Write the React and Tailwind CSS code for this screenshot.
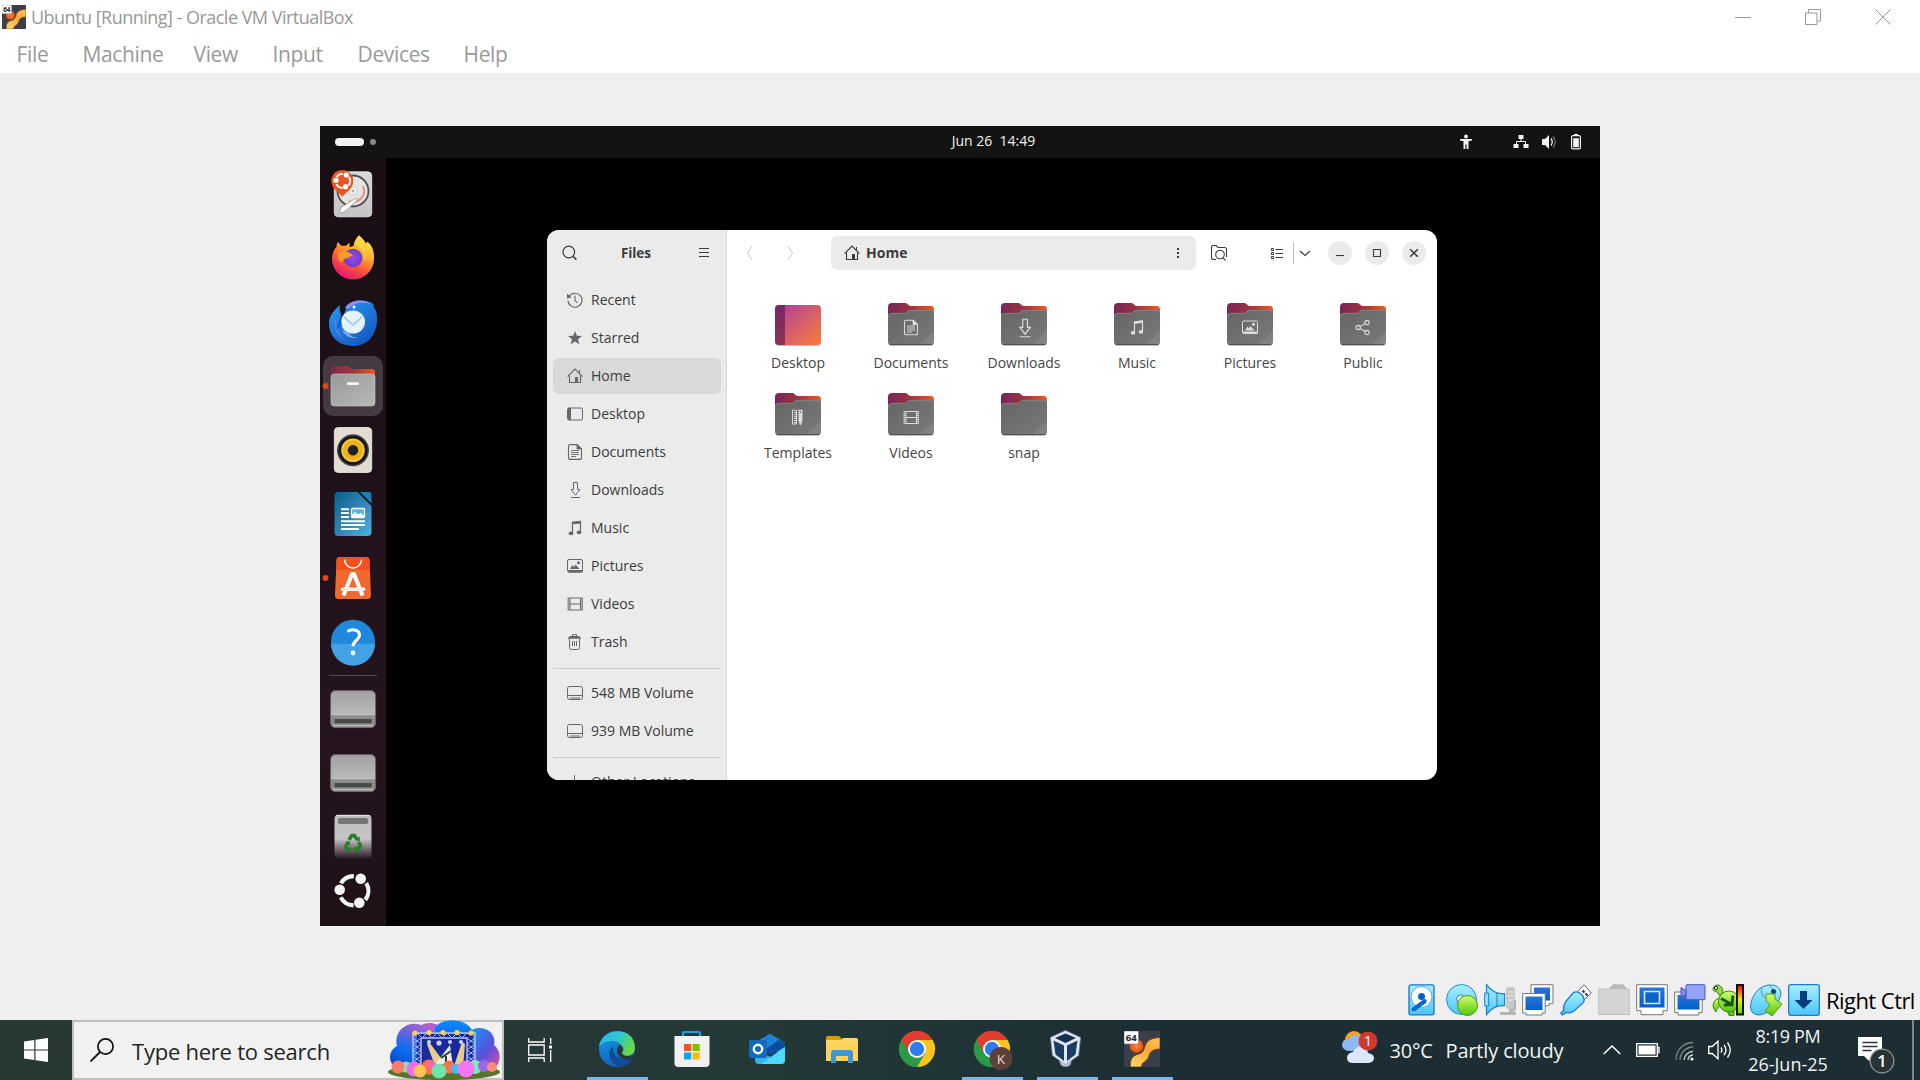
import React from "react";

/* ---------- Symbolic 16px icons used in the file manager ---------- */

const glyphs = {
  recent: (
    <>
      <path d="M2 4.6A7 7 0 1 1 1 8.6" fill="none" stroke="currentColor" strokeWidth="1.1" />
      <path d="M8 3.6v5l2.6 2.2" fill="none" stroke="currentColor" strokeWidth="1.1" />
      <path d="M0 1.6 4.6 5.6 0 6.6z" fill="currentColor" />
    </>
  ),
  starred: (
    <path fill="currentColor" d="M8 1l1.9 4.8 5.1.3-4 3.2 1.4 5L8 11.5l-4.400 2.800 1.400-5-4-3.200 5.100-.3z" />
  ),
  home: (
    <>
      <path d="M.6 8.700 8 1l7.400 7.700" fill="none" stroke="currentColor" strokeWidth="1.200" />
      <path d="M2.500 7.500v7h11v-7M12.500 2v3.500" fill="none" stroke="currentColor" strokeWidth="1.100" />
      <path d="M8 9h3v6H8z" fill="currentColor" />
    </>
  ),
  desktop: (
    <>
      <rect x=".5" y="2" width="15" height="12" rx="1.500" fill="none" stroke="currentColor" />
      <path d="M1 2h3v12H1z" fill="currentColor" />
    </>
  ),
  documents: (
    <>
      <path d="M10 .6H3.500a2 2 0 0 0-2 2v10.800a2 2 0 0 0 2 2h9a2 2 0 0 0 2-2V5z" fill="none" stroke="currentColor" strokeWidth="1.100" />
      <path d="M10 .5V5h4.600zM4 6.500h8M4 8.500h8M4 10.500h8M4 12.500h5" fill="currentColor" stroke="currentColor" strokeWidth=".9" />
    </>
  ),
  downloads: (
    <>
      <path d="M6.500.500h4v7h2.400L8.500 13.200 4.100 7.500h2.400z" fill="none" stroke="currentColor" />
      <path d="M4 15.500h9" stroke="currentColor" />
    </>
  ),
  music: (
    <>
      <path d="M5.500 13V2.500l8-1V12M5.500 3.500l8-1" fill="none" stroke="currentColor" strokeWidth="1.200" />
      <path d="M5 1.800 14 1v2.500L5 4.300z" fill="currentColor" />
      <ellipse cx="4" cy="13.300" rx="2.300" ry="1.900" fill="currentColor" />
      <ellipse cx="12" cy="12.300" rx="2.300" ry="1.900" fill="currentColor" />
    </>
  ),
  pictures: (
    <>
      <rect x=".5" y="1.500" width="15" height="12.500" rx="1.500" fill="none" stroke="currentColor" />
      <path d="M.5 12h15v2.500H1.500zM3 11l2.500-4L7 9l1.500-2.500L12.500 11z" fill="currentColor" />
      <circle cx="11.500" cy="4.800" r="1.500" fill="currentColor" />
    </>
  ),
  videos: (
    <>
      <path d="M3 2h10.500v12H3zM3 8h10.500" fill="none" stroke="currentColor" />
      <path d="M1.700 1.500v13M14.800 1.500v13" stroke="currentColor" strokeWidth="1.600" strokeDasharray="1 1" />
      <path d="M1 1.500v13M15.500 1.500v13" stroke="currentColor" strokeWidth=".6" />
    </>
  ),
  trash: (
    <>
      <path d="M2.500 5v8.500a2 2 0 0 0 2 2h6a2 2 0 0 0 2-2V5M5.500 7v5M7.500 7v5M9.500 7v5" fill="none" stroke="currentColor" />
      <path d="M1 3.200h13v1.600H1zM2.500 2h10v2h-10z" fill="currentColor" />
      <path d="M5.500 2.300V.600h4v1.700" fill="none" stroke="currentColor" />
    </>
  ),
  drive: (
    <>
      <rect x=".5" y="1.500" width="15" height="13" rx="2" fill="none" stroke="currentColor" />
      <path d="M1 10.500h14M3 13h10" stroke="currentColor" />
    </>
  ),
  plus: <path d="M7.500 1v14M1 8h14" stroke="currentColor" />,
  share: (
    <g fill="none" stroke="currentColor" strokeWidth="1.100">
      <circle cx="3.200" cy="8" r="2.100" />
      <circle cx="12" cy="3" r="2.100" />
      <circle cx="12" cy="13" r="2.100" />
      <path d="M5.200 7l4.900-2.900M5.200 9.100l4.900 2.800" />
    </g>
  ),
  templates: (
    <>
      <path d="M2.500.500h4v14h-4z" fill="none" stroke="currentColor" />
      <path d="M5 2.500v11" stroke="currentColor" strokeWidth="2" strokeDasharray="1 1" />
      <path d="M8.500 0h4v11l-1.300 4.500h-1.400L8.500 11z" fill="currentColor" />
      <path d="M9.800 2h1.400v1.500H9.800z" fill="#666" />
    </>
  ),
};

function Glyph({ name, className = "size-4" }) {
  return (
    <svg viewBox="0 0 16 16" className={className}>
      {glyphs[name]}
    </svg>
  );
}

/* ---------- VirtualBox window chrome ---------- */

function VmLogo({ className }) {
  return (
    <svg viewBox="0 0 36 36" className={className} preserveAspectRatio="none">
      <defs>
        <linearGradient id="vmlogo" x1="0" y1="1" x2="1" y2="0">
          <stop offset="0" stopColor="#ffd76a" />
          <stop offset=".6" stopColor="#fba93a" />
          <stop offset="1" stopColor="#ffc65a" />
        </linearGradient>
        <radialGradient id="vmball">
          <stop offset="0" stopColor="#ff8a3c" />
          <stop offset="1" stopColor="#ee4a08" />
        </radialGradient>
      </defs>
      <rect width="36" height="36" rx="1" fill="#3a3f4a" />
      <path d="M36 6.500v11.500c-6 0-10 2-11 7-1 4-4 5-6 7-1 1-1 2-2 4H6.500c-.5-8 2-11.500 8.500-13 4-1 5-4 6-8 2-6 7-8 15-8.500z" fill="url(#vmlogo)" stroke="#7a3c10" strokeWidth=".8" />
      <circle cx="12.500" cy="15" r="6.800" fill="url(#vmball)" />
      <rect x="0" y="0" width="14.500" height="13" rx="1" fill="#fff" stroke="#777" strokeWidth=".6" />
      <text x="7.200" y="10.200" textAnchor="middle" fontFamily="Open Sans, sans-serif" fontWeight="700" fontSize="9.500" fill="#222">64</text>
    </svg>
  );
}

function TitleBar() {
  return (
    <header className="flex h-9 items-center bg-white pb-0.5 pl-0.5">
      <VmLogo className="h-6 w-6" />
      <h1 className="ml-[5px] text-[18px] leading-[34px] tracking-[-0.52px] whitespace-nowrap text-[#989898]">
        Ubuntu [Running] - Oracle VM VirtualBox
      </h1>
      <div className="ml-auto flex items-center gap-[54px] pr-[29px] text-[#999]">
        <svg viewBox="0 0 16 16" className="size-4"><path d="M0 8.500h16" stroke="currentColor" /></svg>
        <svg viewBox="0 0 16 16" className="size-4">
          <path d="M.5 4h11.500v11.500H.5zM3.500 4V.5h12V12H12" fill="none" stroke="currentColor" />
        </svg>
        <svg viewBox="0 0 16 16" className="size-4"><path d="M.5.500l15 15M15.500.500l-15 15" stroke="currentColor" /></svg>
      </div>
    </header>
  );
}

const menus = [
  ["File", "w-[66px]"],
  ["Machine", "w-[111px]"],
  ["View", "w-[79px]"],
  ["Input", "w-[85px]"],
  ["Devices", "w-[106px]"],
  ["Help", "w-[60px]"],
];

function MenuBar() {
  return (
    <nav className="flex h-[37px] bg-white pl-[16.500px] text-[21px] leading-[36px] tracking-[-0.35px] text-[#999]">
      {menus.map(([m, w]) => (
        <span key={m} className={w}>{m}</span>
      ))}
    </nav>
  );
}

/* ---------- Ubuntu top bar and dock ---------- */

function TopBar() {
  return (
    <div className="flex h-8 items-center bg-[#131313] px-[15px] text-[#f2f2f2]">
      <div className="flex flex-1 items-center gap-1.5">
        <span className="h-2 w-[29px] rounded-full bg-[#f2f2f2]" />
        <span className="size-1.5 rounded-full bg-[#8a8a8a]" />
      </div>
      <span className="ml-[67px] h-8 text-[14px] leading-[30px] whitespace-pre">Jun 26  14:49</span>
      <div className="flex flex-1 items-center justify-end">
        <svg viewBox="0 0 16 16" className="mr-[39px] size-4">
          <circle cx="8" cy="2.500" r="1.900" fill="currentColor" />
          <path d="M2 5h12v1.500l-3.500.700V15H8.600v-4.500H7.400V15H5.500V7.200L2 6.500z" fill="currentColor" />
        </svg>
        <svg viewBox="0 0 16 16" className="mr-3 size-4">
          <path d="M5.500 1h5v4h-5zM.5 10h5v4h-5zM10.500 10h5v4h-5z" fill="currentColor" />
          <path d="M8 5v2.500M3.500 10V7.500h9V10" fill="none" stroke="currentColor" />
        </svg>
        <svg viewBox="0 0 16 16" className="mr-3.5 size-4">
          <path d="M1 5h3l4-4v14l-4-4H1z" fill="currentColor" />
          <path d="M10 4.500q2.500 3.500 0 7" fill="none" stroke="currentColor" strokeWidth="1.300" />
          <path d="M12 2.500q4.500 5.500 0 11" fill="none" stroke="#777" strokeWidth="1.200" />
        </svg>
        <svg viewBox="0 0 10 16" className="mr-1 h-4 w-2.5">
          <path d="M3 0h4v2H3z" fill="currentColor" />
          <rect x=".6" y="1.600" width="8.800" height="13.300" rx="1.500" fill="none" stroke="currentColor" strokeWidth="1.200" />
          <path d="M2.200 4.200h5.600v9H2.200z" fill="currentColor" />
        </svg>
      </div>
    </div>
  );
}

function UbuntuRing({ color }) {
  return (
    <g fill="none" stroke={color} strokeWidth="4.200">
      <path d="M46.200 14.200A14.600 14.600 0 0 1 45.300 30.900" />
      <path d="M33.500 36.300A14.600 14.600 0 0 1 20.800 28.400" />
      <path d="M21 14.300A14.600 14.600 0 0 1 33.800 7.100" />
      <g fill={color} stroke="none">
        <circle cx="40.700" cy="9.700" r="5.300" />
        <circle cx="19.700" cy="20.700" r="5.300" />
        <circle cx="39.300" cy="33.700" r="5.300" />
      </g>
    </g>
  );
}

function DockSlot({ children, h = 64 }) {
  return (
    <svg viewBox={`0 0 66 ${h}`} width="66" height={h} className="block shrink-0">
      {children}
    </svg>
  );
}

function DriveIcon() {
  return (
    <DockSlot>
      <rect x="10.600" y="13.600" width="45" height="37" rx="5" fill="url(#metal)" stroke="#666" />
      <path d="M11 38h44v8q0 4.200-4 4.200H15q-4 0-4-4.200z" fill="#8c8c8c" />
      <path d="M11 37.700h44" stroke="#c8c8c8" strokeWidth=".8" />
      <path d="M14.300 42h37.400v2.800q0 1.500-1.500 1.500H15.800q-1.500 0-1.500-1.500z" fill="#4a4a4a" />
      <path d="M13 48.700h40" stroke="#ccc" strokeWidth="1" />
    </DockSlot>
  );
}

function Dock() {
  return (
    <aside className="flex w-[66px] flex-col bg-linear-to-b from-[#190e14] via-[#25141f] via-75% to-[#1e1118] pt-1">
      <svg width="0" height="0" className="absolute">
        <defs>
          <linearGradient id="metal" x1="0" y1="0" x2="0" y2="1"><stop offset="0" stopColor="#a2a2a2" /><stop offset="1" stopColor="#c6c6c6" /></linearGradient>
          <linearGradient id="tile" x1="0" y1="0" x2="0" y2="1"><stop offset="0" stopColor="#dadada" /><stop offset="1" stopColor="#c4c4c4" /></linearGradient>
          <linearGradient id="fox" x1=".85" y1=".05" x2=".35" y2="1"><stop offset="0" stopColor="#fff44f" /><stop offset=".35" stopColor="#ffb02e" /><stop offset=".65" stopColor="#ff5a36" /><stop offset="1" stopColor="#e5146f" /></linearGradient>
          <radialGradient id="globe"><stop offset="0" stopColor="#a348f0" /><stop offset="1" stopColor="#6a3fc4" /></radialGradient>
          <linearGradient id="bird" x1="0" y1="0" x2=".7" y2="1"><stop offset="0" stopColor="#2a9bf5" /><stop offset="1" stopColor="#1259bf" /></linearGradient>
          <linearGradient id="back" x1="0" y1="0" x2="1" y2="0"><stop offset="0" stopColor="#7a2950" /><stop offset=".5" stopColor="#a5343b" /><stop offset="1" stopColor="#ee5420" /></linearGradient>
          <linearGradient id="front" x1="0" y1="0" x2="1" y2="1"><stop offset="0" stopColor="#999" /><stop offset="1" stopColor="#b9b9b9" /></linearGradient>
          <linearGradient id="writer" x1="0" y1="0" x2="1" y2="1"><stop offset="0" stopColor="#0d5d8c" /><stop offset="1" stopColor="#4eb0e2" /></linearGradient>
          <linearGradient id="bin" x1="0" y1="0" x2="0" y2="1"><stop offset="0" stopColor="#bdbdbd" /><stop offset=".55" stopColor="#c6c6c6" /><stop offset="1" stopColor="#2a1a24" /></linearGradient>
          <linearGradient id="folderback" x1="0" y1="0" x2="1" y2="0"><stop offset="0" stopColor="#77265a" /><stop offset=".5" stopColor="#9c3440" /><stop offset="1" stopColor="#f2581f" /></linearGradient>
          <linearGradient id="folderfront" x1="0" y1="0" x2="1" y2="1"><stop offset="0" stopColor="#656565" /><stop offset="1" stopColor="#7a7a7a" /></linearGradient>
          <linearGradient id="desk" x1="0" y1="0" x2="1" y2="1"><stop offset="0" stopColor="#a83aa0" /><stop offset=".5" stopColor="#d45f6c" /><stop offset="1" stopColor="#f97b3a" /></linearGradient>
        </defs>
      </svg>

      {/* Installer */}
      <DockSlot>
        <rect x="14.300" y="9.800" width="37.400" height="45" rx="4" fill="url(#tile)" stroke="#eee" strokeWidth=".8" />
        <circle cx="33" cy="29" r="15.500" fill="#e4e4e4" stroke="#4d4d4d" strokeWidth="1.800" />
        <path d="M43 24a11 11 0 0 1-14 15" fill="none" stroke="#e8927a" strokeWidth="2" />
        <circle cx="33" cy="29" r="4" fill="#fafafa" stroke="#ccc" />
        <circle cx="33" cy="29" r="1.500" fill="#aaa" />
        <path d="M19.500 50l1.500-4.500 15-9.500 1.500 2-12.500 11.500-4 1.500z" fill="#fff" stroke="#777" strokeWidth=".6" />
        <path d="M22.300 35c-3-4.500-11-8-11-16a11 11 0 0 1 22 0c0 8-8 11.500-11 16z" fill="#e95420" />
        <g transform="translate(6.300 8.200) scale(.49)"><UbuntuRing color="#fff" /></g>
      </DockSlot>

      {/* Firefox */}
      <DockSlot>
        <path d="M39 9.300c3 3 5.500 5 7 8.500 0-1 1.500-2 1.500-2C53 20 54.300 27 54 33A21 20.500 0 0 1 12 33c0-5 2-10 4.500-12 0-2 .5-3.500 1.500-5l3.500 4c2-.5 3-.3 4.500 0 1-1.500 2-2.500 3.500-3v4l4-1c.5-5 3-8 5.500-10.700z" fill="url(#fox)" />
        <circle cx="33" cy="32" r="9.300" fill="url(#globe)" />
        <path d="M18 27c3-2.500 7-2 10-1l5 3c-3 1-4 3-7 3.500-3 .5-5 2-4 5-3-2-5-6-4-10.500z" fill="#ff9a2a" />
        <path d="M40 17c6 5 8 12 4 19 2-8-1-13-6-16z" fill="#ffdf4a" opacity=".8" />
      </DockSlot>

      {/* Thunderbird */}
      <DockSlot>
        <path d="M9 33c0-6 3-11 11-18-1 4 0 6 1 9 1 3 0 5-1 8l4-5c0-10 8-16.500 17-16.500 5 0 9 1 13 4-1 1-1 2 0 3 3 4 3.500 9 3 14-1 15-11 24.500-23.500 24.500C19 56 9 47 9 33z" fill="url(#bird)" />
        <path d="M25 18c4-8 18-10 26-4-8-2-17-2-22 5z" fill="#8f8ff5" />
        <ellipse cx="33" cy="32" rx="12" ry="11.500" fill="#e3f2fd" />
        <path d="M23.500 26.500L33 35l9.500-8.500" fill="none" stroke="#9cc4e8" strokeWidth="1.500" />
        <path d="M29 43c2 4 5 4 9 5-8 1-14-3-16-8z" fill="#7fa8f2" />
        <circle cx="34" cy="17" r="1.500" fill="#fff" />
        <path d="M15 28c-2 8 0 16 8 22-4-8-6-13-8-22z" fill="#5c7ff0" opacity=".7" />
        <path d="M21 24l-5 16 6-5z" fill="#0f4fae" opacity=".6" />
      </DockSlot>

      {/* Files, the active application */}
      <DockSlot>
        <rect x="3" y="2" width="60" height="60" rx="10" fill="#453a41" />
        <circle cx="5.500" cy="32" r="3" fill="#d84a1b" />
        <path d="M11 26V15q0-3 3-3h13q1.500 0 2.500 1l2 2H52q3 0 3 3v8z" fill="url(#back)" />
        <rect x="11" y="20" width="44" height="32" rx="3.500" fill="url(#front)" stroke="#ccc" strokeWidth=".6" />
        <rect x="27" y="28.300" width="12" height="2.800" rx="1" fill="#f4f4f4" />
      </DockSlot>

      {/* Rhythmbox */}
      <DockSlot>
        <rect x="14.300" y="9.500" width="37.400" height="45" rx="4" fill="#e2ddd2" stroke="#f5f2ea" strokeWidth=".8" />
        <circle cx="33" cy="32.300" r="16" fill="#444" />
        <circle cx="33" cy="32.300" r="14.500" fill="#14161c" />
        <circle cx="33" cy="32.300" r="11.800" fill="#f5c93a" />
        <circle cx="33" cy="32.300" r="10" fill="#e9b31c" />
        <circle cx="33" cy="32.300" r="5.200" fill="#222" />
      </DockSlot>

      {/* LibreOffice Writer */}
      <DockSlot>
        <path d="M18 10h20l13.500 13.500V50q0 4-4 4H18q-3.500 0-3.500-4V13.500Q14.500 10 18 10z" fill="url(#writer)" />
        <path d="M38.500 10H49q2.500 0 2.500 2.500V22z" fill="#1d7fb5" />
        <path d="M37.500 10L51.500 24v-2.500L40 10z" fill="#111" />
        <path d="M21 27.200h8M21 31h8M21 35h8M21 39.200h24M21 43h24M21 47h18" stroke="#fff" strokeWidth="2" />
        <rect x="31.500" y="26.500" width="13" height="9" rx="1" fill="#57b5e6" stroke="#fff" strokeWidth="1.300" />
        <path d="M32 35v-2l3-3 3 2.500 3-1.500 3 3v1z" fill="#fff" />
      </DockSlot>

      {/* App Center */}
      <DockSlot>
        <circle cx="5.500" cy="32" r="3" fill="#d84a1b" />
        <path d="M20 11h26q3.300 0 3.500 3l1.500 35q.2 4-3.500 4h-29q-3.700 0-3.500-4l1.500-35q.2-3 3.500-3z" fill="#f2692f" />
        <path d="M20 11h26q3.300 0 3.500 3l.3 10H16.200l.3-10q.2-3 3.500-3z" fill="#f4511c" />
        <path d="M24.500 13.500a8.500 8.500 0 0 0 17 0" fill="none" stroke="#fff" strokeWidth="1.500" />
        <path d="M23.500 49.500L32 28h2l8.500 21.500" fill="none" stroke="#fff" strokeWidth="4" strokeLinejoin="round" />
        <path d="M22.500 43.200h21" stroke="#fff" strokeWidth="3.600" strokeLinecap="round" />
        <path d="M22.500 43.200h21" stroke="#f9c5b0" strokeWidth=".8" />
      </DockSlot>

      {/* Help */}
      <DockSlot>
        <circle cx="33" cy="31.700" r="22" fill="#1f88dd" />
        <path d="M11 33.700a22 22 0 0 0 44 0z" fill="#41a3e6" />
        <path d="M27.500 21.800c3-3 12-3 12 3.500 0 5-6.500 5-6.500 11" fill="none" stroke="#fff" strokeWidth="3" />
        <circle cx="33" cy="43" r="2.400" fill="#fff" />
      </DockSlot>

      <div className="mx-[9px] mt-[1px] mb-[1px] h-px bg-[#54484f]" />
      <DriveIcon />
      <DriveIcon />

      {/* Trash */}
      <DockSlot>
        <rect x="14.500" y="9.800" width="37" height="43.500" rx="4" fill="url(#bin)" />
        <path d="M16 10.500h34" stroke="#e2e2e2" />
        <rect x="18" y="13" width="30" height="6" rx="2" fill="#757575" />
        <g transform="translate(3.300 3.800) scale(.9)">
          <g fill="none" stroke="#2b7d2a" strokeWidth="4">
            <path d="M28.500 34.500l3.200-4.700h3l2.800 4" />
            <path d="M39.500 37l1.800 4.500-1.600 3H34.500" />
            <path d="M31.500 45h-5l-1.500-3 2.200-4.500" />
          </g>
          <path d="M40.500 31v5.500l-5.500-2zM36.500 41.500v6.500l-4-3.200zM24 37l5-1.500 1 5z" fill="#2b7d2a" />
        </g>
      </DockSlot>

      <DockSlot h={43}><UbuntuRing color="#f4f4f4" /></DockSlot>
    </aside>
  );
}

/* ---------- Files window ---------- */

const places = [
  ["recent", "Recent"],
  ["starred", "Starred"],
  ["home", "Home"],
  ["desktop", "Desktop"],
  ["documents", "Documents"],
  ["downloads", "Downloads"],
  ["music", "Music"],
  ["pictures", "Pictures"],
  ["videos", "Videos"],
  ["trash", "Trash"],
];

function Place({ icon, label, active }) {
  return (
    <li className={`flex h-9 items-center gap-2 rounded-md pl-3.5 text-[#3b3b3b] ${active ? "bg-[#d9d9d9]" : ""}`}>
      <Glyph name={icon} className="size-4 text-[#676767]" />
      <span className="leading-5 whitespace-nowrap">{label}</span>
    </li>
  );
}

function Sidebar() {
  return (
    <div className="flex w-[180px] shrink-0 flex-col border-r border-[#d8d8d8] bg-[#ebebeb]">
      <div className="flex h-[46px] shrink-0 items-center pl-[15px] text-[#3b3b3b]">
        <svg viewBox="0 0 16 16" className="size-4">
          <circle cx="6.800" cy="7" r="5.800" fill="none" stroke="currentColor" strokeWidth="1.200" />
          <path d="M11 11.200l3.400 3.400" stroke="currentColor" strokeWidth="1.500" />
        </svg>
        <span className="ml-[43px] w-[78px] text-[13.500px] leading-5 font-bold tracking-[-0.1px]">Files</span>
        <svg viewBox="0 0 10 10" className="size-2.5"><path d="M0 .5h10M0 4.500h10M0 8.500h10" stroke="currentColor" strokeWidth="1.100" /></svg>
      </div>
      <ul className="flex flex-col gap-0.5 pt-1.5 pr-[5px] pl-1.5">
        {places.map(([icon, label]) => (
          <Place key={icon} icon={icon} label={label} active={label === "Home"} />
        ))}
      </ul>
      <div className="mt-2 mr-[5px] ml-1.5 h-px shrink-0 bg-[#cbcbcb]" />
      <ul className="flex flex-col gap-0.5 pt-1.5 pr-[5px] pl-1.5">
        <Place icon="drive" label="548 MB Volume" />
        <Place icon="drive" label="939 MB Volume" />
      </ul>
      <div className="mt-2 mr-[5px] ml-1.5 h-px shrink-0 bg-[#cbcbcb]" />
      <ul className="pt-1.5 pr-[5px] pl-1.5">
        <Place icon="plus" label="Other Locations" />
      </ul>
    </div>
  );
}

const folders = [
  ["Desktop", "desk"],
  ["Documents", "documents"],
  ["Downloads", "downloads"],
  ["Music", "music"],
  ["Pictures", "pictures"],
  ["Public", "share"],
  ["Templates", "templates"],
  ["Videos", "videos"],
  ["snap", null],
];

function FolderIcon({ icon }) {
  if (icon === "desk") {
    return (
      <svg viewBox="0 0 46 44" width="46" height="44">
        <rect y="3" width="46" height="40" rx="4" fill="#000" opacity=".25" />
        <rect y="2" width="46" height="40" rx="4" fill="url(#desk)" />
        <path d="M10 2v40H4q-4 0-4-4V6q0-4 4-4z" fill="#4a1040" opacity=".55" />
      </svg>
    );
  }
  const large = icon === "downloads";
  return (
    <svg viewBox="0 0 46 44" width="46" height="44">
      <path d="M0 12V4q0-4 4-4h14l4 3h21q3 0 3 4v6z" fill="url(#folderback)" />
      <rect y="12" width="46" height="31" rx="4" fill="#000" opacity=".25" />
      <path d="M0 14q0-4 4-4h13.500l3.500-3h22q3 0 3 3v28q0 4-4 4H4q-4 0-4-4z" fill="url(#folderfront)" />
      <path d="M.5 13.500q0-3.200 3.500-3.200h13.700l3.500-2.900h21.800q2.500 0 2.500 2.600" fill="none" stroke="#8d8d8d" strokeWidth=".7" />
      <path d="M46 28v10q0 4-4 4H31z" fill="#fff" opacity=".08" />
      <path d="M1.500 41.500h43" stroke="#4c4c4c" strokeWidth=".9" />
      {icon && (
        <svg
          x={large ? 14 : 15}
          y={large ? 15.5 : 16.5}
          width={large ? 19 : 16}
          height={large ? 19 : 16}
          viewBox="0 0 16 16"
          className="text-[#dcdcdc]"
        >
          {glyphs[icon]}
        </svg>
      )}
    </svg>
  );
}

function FilesWindow() {
  return (
    <section className="mt-[72px] ml-[161px] flex h-[550px] w-[890px] overflow-hidden rounded-xl bg-white text-[14px]">
      <Sidebar />
      <div className="flex flex-1 flex-col text-[#3b3b3b]">
        <div className="flex h-[46px] items-center pl-[19px]">
          <svg viewBox="0 0 8 16" className="h-4 w-2"><path d="M6 1L1.500 8 6 15" fill="none" stroke="#d6d6d6" strokeWidth="1.200" /></svg>
          <svg viewBox="0 0 8 16" className="ml-8 h-4 w-2"><path d="M2 1l4.500 7L2 15" fill="none" stroke="#d6d6d6" strokeWidth="1.200" /></svg>
          <div className="ml-[37px] flex h-[34px] w-[365px] items-center rounded-md bg-[#ebebeb] pl-[13px]">
            <Glyph name="home" />
            <span className="ml-1.5 leading-5 font-bold">Home</span>
            <svg viewBox="0 0 4 12" className="mr-4 ml-auto h-3 w-1"><path d="M1 1h2v2H1zM1 5h2v2H1zM1 9h2v2H1z" fill="currentColor" /></svg>
          </div>
          <svg viewBox="0 0 16 16" className="ml-[15px] size-4">
            <path d="M5 14.500H2.500q-2 0-2-2v-10q0-2 2-2H5L7 2.500h6.500q2 0 2 2V12" fill="none" stroke="currentColor" strokeWidth="1.100" />
            <circle cx="9" cy="9.500" r="4.300" fill="none" stroke="currentColor" strokeWidth="1.100" />
            <path d="M12 12.800l2.500 2.500" stroke="currentColor" strokeWidth="1.200" />
          </svg>
          <svg viewBox="0 0 12 11" className="ml-11 h-[11px] w-3">
            <path d="M.500.500h2v2h-2zM.500 4.500h2v2h-2zM.500 8.500h2v2h-2zM4.500 1.500H12M4.500 5.500H12M4.500 9.500H12" fill="none" stroke="currentColor" />
          </svg>
          <span className="ml-2.5 h-[22px] w-px bg-[#bdbdbd]" />
          <svg viewBox="0 0 12 8" className="ml-[5px] h-2 w-3"><path d="M1 2l5 4.500L11 2" fill="none" stroke="currentColor" strokeWidth="1.200" /></svg>
          <div className="ml-[17px] flex gap-[13px]">
            <span className="flex size-6 items-center justify-center rounded-full bg-[#ebebeb]">
              <svg viewBox="0 0 10 10" className="size-2.5"><path d="M1 7.500h8" stroke="currentColor" strokeWidth="1.200" /></svg>
            </span>
            <span className="flex size-6 items-center justify-center rounded-full bg-[#ebebeb]">
              <svg viewBox="0 0 10 10" className="size-2.5"><path d="M1.500 1.500h7v7h-7z" fill="none" stroke="currentColor" strokeWidth="1.100" /></svg>
            </span>
            <span className="flex size-6 items-center justify-center rounded-full bg-[#ebebeb]">
              <svg viewBox="0 0 10 10" className="size-2.5"><path d="M1.200 1.200l7.600 7.600M8.800 1.200L1.200 8.800" stroke="currentColor" strokeWidth="1.500" /></svg>
            </span>
          </div>
        </div>
        <div className="mt-[27px] ml-[14.500px] grid w-[678px] grid-cols-6 auto-rows-[90px] text-[#454545]">
          {folders.map(([label, icon]) => (
            <div key={label} className="flex flex-col items-center gap-1.5">
              <FolderIcon icon={icon} />
              <span className="leading-5">{label}</span>
            </div>
          ))}
        </div>
      </div>
    </section>
  );
}

/* ---------- VirtualBox status bar ---------- */

function StatusIcons() {
  return (
    <div className="flex gap-1.5">
      <svg width="0" height="0" className="absolute">
        <defs>
          <linearGradient id="aqua" x1="0" y1="0" x2="0" y2="1"><stop offset="0" stopColor="#a8f0ff" /><stop offset="1" stopColor="#4cc4fb" /></linearGradient>
          <linearGradient id="screen" x1="0" y1="0" x2="0" y2="1"><stop offset="0" stopColor="#2a74d8" /><stop offset="1" stopColor="#0060cc" /></linearGradient>
          <linearGradient id="lime" x1="0" y1="0" x2="0" y2="1"><stop offset="0" stopColor="#d0ff70" /><stop offset="1" stopColor="#56c408" /></linearGradient>
          <linearGradient id="load" x1="0" y1="0" x2="0" y2="1"><stop offset="0" stopColor="#f00" /><stop offset=".5" stopColor="#ffe600" /><stop offset="1" stopColor="#4cdd00" /></linearGradient>
        </defs>
      </svg>
      {/* Hard disk */}
      <svg viewBox="2 0 32 32" className="size-8">
        <rect x="3" y=".8" width="25" height="30" rx="2" fill="url(#aqua)" stroke="#1a72c8" strokeWidth="1.300" />
        <circle cx="15.500" cy="13" r="10.500" fill="#fff" stroke="#5fa8dc" />
        <circle cx="15.500" cy="12.500" r="3.500" fill="#0b5fc2" />
        <path d="M18 15q4 0 2 4L9 27q-5 1-3-3z" fill="#0b66cc" />
      </svg>
      {/* Optical disc */}
      <svg viewBox="0 0 32 32" className="size-8">
        <circle cx="15.500" cy="15.500" r="15" fill="url(#aqua)" stroke="#2b88cc" />
        <circle cx="14.500" cy="15" r="4" fill="#efefef" stroke="#2b88cc" />
        <circle cx="21.500" cy="21.500" r="10" fill="url(#lime)" stroke="#4d9c0c" />
      </svg>
      {/* Audio */}
      <svg viewBox="0 0 32 32" className="size-8">
        <rect x="22" y="3" width="9" height="22" rx="3" fill="#c6c6c6" />
        <path d="M26.500 25v4M16 29.500h16M31.500 16v7q-1 4-6 4" stroke="#b4b4b4" strokeWidth="3" fill="none" />
        <path d="M24 8h6M24 12h6M24 16h6" stroke="#eee" />
        <path d="M2.500.700q7 10 18 9v12q-11-1-18 9z" fill="url(#aqua)" stroke="#1a80d0" strokeWidth="1.200" />
        <path d="M.700 9h4v13h-4z" fill="#8ce0fd" stroke="#1a80d0" />
        <path d="M13 9v13" stroke="#1a80d0" />
      </svg>
      {/* Network */}
      <svg viewBox="0 0 32 32" className="size-8">
        <path d="M9 .700h22v19h-4v2H9z" fill="#fff" stroke="#777" />
        <path d="M12 3.500h16v13H12z" fill="url(#screen)" />
        <path d="M.700 9.500h22.500v19.500h-3v2H4v-2H.700z" fill="#fff" stroke="#777" />
        <path d="M3.500 12.500h17v13.500h-17z" fill="url(#screen)" />
      </svg>
      {/* USB */}
      <svg viewBox="0 0 32 32" className="size-8">
        <path d="M17 8.500L24 .700 31.300 9l-7.500 7z" fill="#fafafa" stroke="#666" />
        <path d="M22.500 6.500l2 2M25.500 9.500l2 2" stroke="#333" strokeWidth="2" />
        <path d="M13.500 8.500q4-2 8 2t2 8L14 27q-4 2.500-8 1.500l-3.500 2.500-1.800-1.800 3-3q-.5-5 2-8.500z" fill="url(#aqua)" stroke="#1a72c8" strokeWidth="1.200" />
      </svg>
      {/* Shared folder */}
      <svg viewBox="0 0 32 32" className="size-8">
        <path d="M.700 5h10.500L15 .700h10L29 5h2.300v25.500H.700z" fill="#d4d4d4" stroke="#c0c0c0" />
        <path d="M11.500 5L15 .700h10L29 5z" fill="#b9b9b9" />
      </svg>
      {/* Display */}
      <svg viewBox="0 0 32 32" className="size-8">
        <path d="M.700.700h30.600v26H27v4H5v-4H.700z" fill="#fff" stroke="#777" />
        <path d="M3.500 3.500h25v20h-25z" fill="url(#screen)" />
        <path d="M8.500 7.500h15v12h-15z" fill="#0a64c8" stroke="#d8e8fa" strokeWidth="1.600" />
      </svg>
      {/* Recording */}
      <svg viewBox="0 0 32 32" className="size-8">
        <path d="M.700 8h27.500v20.500h-3.500v2.500H4v-2.500H.700z" fill="#fff" stroke="#777" />
        <path d="M3.500 11h22v14.500h-22z" fill="url(#screen)" />
        <rect x="12" y=".700" width="19" height="15" rx="1" fill="#92a4f8" stroke="#4a54c0" />
        <path d="M7 3.500l5 3v4l-5 3z" fill="#7f8df0" stroke="#4a54c0" />
      </svg>
      {/* Guest execution */}
      <svg viewBox="0 0 32 32" className="size-8">
        <path d="M15 26h7v5.500h-5z" fill="#5cc40c" stroke="#3f8c0c" />
        <path d="M10 14q-8 0-9 7 0 4 3 7 1-6 7-7z" fill="url(#lime)" stroke="#3f8c0c" />
        <ellipse cx="17" cy="17.500" rx="10.500" ry="10.500" fill="url(#lime)" stroke="#3f8c0c" />
        <path d="M1 4q2-4 6-3 4 2 4 7l-3 4-3-4Q0 7 1 4z" fill="#8fdc3a" stroke="#3f8c0c" />
        <path d="M9 14.500l11 6 1-9M20 20.500l-8 .5" fill="none" stroke="#1b560a" strokeWidth="2.800" />
        <circle cx="4" cy="4" r="1.600" fill="#fff" stroke="#222" />
        <rect x="25" y="1" width="6" height="29.500" fill="url(#load)" stroke="#111" strokeWidth="2" />
      </svg>
      {/* Mouse integration */}
      <svg viewBox="0 0 32 32" className="size-8">
        <path d="M18 1q12-1 13 8 0 6-7 13-8 9-15 9-8 0-8.500-8Q.500 14 8 6q4-4 10-5z" fill="url(#aqua)" stroke="#2b7cc0" />
        <path d="M12 3q-2 7 3 11M19 1q3 3 5 7" fill="none" stroke="#3f96d4" />
        <circle cx="23.500" cy="7.500" r="2.500" fill="#123f78" />
        <path d="M16 10h9v5l7 5-10 12-7-5 5-6-4-4z" fill="url(#lime)" stroke="#4d9c0c" />
      </svg>
      {/* Host key */}
      <svg viewBox="0 0 32 32" className="size-8">
        <rect x=".700" y=".700" width="30.600" height="30.600" rx="2" fill="url(#aqua)" stroke="#2378c4" strokeWidth="1.300" />
        <path d="M12 7h7v9h5.500L15.500 25l-9-9H12z" fill="#0a3d80" />
      </svg>
    </div>
  );
}

/* ---------- Windows taskbar ---------- */

function SearchArt() {
  return (
    <svg viewBox="0 0 114 60" width="114" height="60" className="block">
      <defs>
        <linearGradient id="cloudL" x1=".6" y1="0" x2=".2" y2="1"><stop offset="0" stopColor="#b05fd0" /><stop offset=".6" stopColor="#0a6cf0" /><stop offset="1" stopColor="#0b3fb8" /></linearGradient>
        <linearGradient id="cloudC" x1="0" y1="0" x2="0" y2="1"><stop offset="0" stopColor="#0a8cff" /><stop offset="1" stopColor="#1a2cc0" /></linearGradient>
        <linearGradient id="cloudR" x1="0" y1="0" x2=".9" y2="1"><stop offset="0" stopColor="#14a0ff" /><stop offset=".6" stopColor="#5a50d8" /><stop offset="1" stopColor="#e050a8" /></linearGradient>
      </defs>
      <ellipse cx="57" cy="52" rx="56" ry="8" fill="#56752a" />
      <path d="M12 50C2 46-1 32 10 26 6 12 20 0 34 5c8-4 18-2 20 4v42z" fill="url(#cloudL)" />
      <path d="M48 8c6-11 32-11 38 4v38H48z" fill="url(#cloudC)" />
      <path d="M84 10c12-6 26 2 23 15 10 8 6 24-6 26H80z" fill="url(#cloudR)" />
      <path d="M30 14h56v34H30z" fill="#1a2a9c" />
      <path d="M26 13h62v35M26 13v35M34 18h46v30M34 18v30" fill="none" stroke="#b4c6f6" strokeWidth="1.400" />
      <path d="M26 18l8 6-8 6 8 6-8 6 8 6M34 18l-8 6 8 6-8 6 8 6-8 6M80 18l8 6-8 6 8 6-8 6 8 6M88 18l-8 6 8 6-8 6 8 6-8 6M30 13l5 5 5-5 5 5 5-5 5 5 5-5 5 5 5-5 5 5 5-5" fill="none" stroke="#a9bdf2" strokeWidth="1" />
      <path d="M42 22l-2 2 8 22h12zM75 22l-8 24 9 1 2-23z" fill="#f0d68a" opacity=".95" />
      <path d="M63 25l3 22H46z" fill="#eef0e4" />
      <path d="M54 38l10-7M59 36v9M54 45h9" stroke="#21423a" strokeWidth="2" />
      <g fill="#ffd24a">
        <circle cx="28" cy="13" r="2.600" /><circle cx="42" cy="12.500" r="2.600" /><circle cx="56" cy="12.500" r="2.600" /><circle cx="70" cy="12.500" r="2.600" /><circle cx="84" cy="13" r="2.600" />
      </g>
      <g fill="#c9d6f5"><circle cx="42" cy="22" r="2" /><circle cx="52" cy="23" r="2.600" /><circle cx="63" cy="22" r="2" /><circle cx="74" cy="22" r="2" /></g>
      <circle cx="19" cy="47" r="5.500" fill="#7fe8b0" /><circle cx="11" cy="47" r="6.500" fill="#ff7d68" />
      <circle cx="42" cy="47" r="7.500" fill="#ff7048" /><circle cx="27" cy="49" r="7.500" fill="#f56ae8" />
      <circle cx="45" cy="45" r="4" fill="#ff62c0" /><circle cx="62" cy="47" r="6.500" fill="#ff6e50" />
      <circle cx="33" cy="51" r="6.500" fill="#ffc35a" /><circle cx="69" cy="49" r="5" fill="#40bdf5" />
      <circle cx="88" cy="47" r="7" fill="#80e8b4" /><circle cx="97" cy="46" r="6" fill="#9c68e8" />
      <circle cx="52" cy="51" r="7.500" fill="#6fe4a8" /><circle cx="79" cy="49" r="8.500" fill="#f476f5" />
      <circle cx="105" cy="47" r="5" fill="#ff8a78" />
    </svg>
  );
}

function Chrome({ children }) {
  return (
    <svg viewBox="0 0 48 48" className="size-12">
      <circle cx="24" cy="24" r="18" fill="#2b9a47" />
      <path d="M24 24L8.400 15A18 18 0 0 1 39.600 15H24z" fill="#e33b2e" />
      <path d="M24 15h15.600A18 18 0 0 1 24 42l7.800-13.500z" fill="#fcc31e" />
      <path d="M8.400 15l7.800 13.500L24 24V15z" fill="#e33b2e" />
      <path d="M8.400 15A18 18 0 0 0 24 42l7.800-13.500-15.600 0z" fill="#2b9a47" />
      <circle cx="24" cy="24" r="9" fill="#fff" />
      <circle cx="24" cy="24" r="7.200" fill="#2d7df0" />
      {children}
    </svg>
  );
}

function TaskButton({ open, children }) {
  return (
    <div className="flex w-[75px] shrink-0 flex-col items-center">
      <div className="flex h-[57px] items-center justify-center pt-1 pb-1">{children}</div>
      {open && <div className="ml-px h-[3px] w-[61px] bg-[#76b9ed]" />}
    </div>
  );
}

function Taskbar() {
  return (
    <footer className="flex h-[60px] shrink-0 bg-linear-to-r from-[#283832] via-[#243838] via-40% to-[#1c2e33] to-60% text-[#f0f4f4]">
      <div className="flex w-[72px] items-center justify-center">
        <svg viewBox="0 0 24 24" className="size-6">
          <path d="M0 3.400l10.300-1.500v9.500H0zM11.500 1.700L24 0v11.400H11.500zM0 12.600h10.300v9.500L0 20.600zM11.500 12.600H24V24l-12.500-1.700z" fill="#fff" />
        </svg>
      </div>
      <div className="relative flex w-[432px] items-center border-2 border-[#bfbfbf] bg-[#f1f1f1] pl-4">
        <svg viewBox="0 0 24 24" className="size-6">
          <circle cx="15.500" cy="8.500" r="7.600" fill="none" stroke="#111" strokeWidth="1.700" />
          <path d="M10 14L.500 23.500" stroke="#111" strokeWidth="1.800" />
        </svg>
        <span className="mt-0.5 ml-[18px] text-[22px] leading-8 tracking-[-0.24px] whitespace-nowrap text-[#242424]">Type here to search</span>
        <div className="absolute top-[-2px] right-[1px]"><SearchArt /></div>
      </div>
      <div className="flex w-[75px] items-center pl-6">
        <svg viewBox="0 0 24 24" className="size-6">
          <path d="M.700 0v4h15.500V0M.700 24v-4h15.500v4M.700 7h15.500v10H.700zM22.700 0v6M22.700 12v12" fill="none" stroke="#fff" strokeWidth="1.300" />
          <path d="M21 7.500h3v3h-3z" fill="#fff" />
        </svg>
      </div>

      <TaskButton open>
        <svg viewBox="0 0 48 48" className="size-12">
          <defs>
            <linearGradient id="edgeTop" x1="0" y1="0" x2="1" y2=".4"><stop offset="0" stopColor="#25b8e8" /><stop offset=".55" stopColor="#2fc6d2" /><stop offset="1" stopColor="#62d84a" /></linearGradient>
            <linearGradient id="edgeBot" x1="0" y1="0" x2=".4" y2="1"><stop offset="0" stopColor="#1a9be0" /><stop offset="1" stopColor="#0e63bd" /></linearGradient>
          </defs>
          <circle cx="24" cy="24" r="18" fill="url(#edgeBot)" />
          <path d="M6 22C8 2 42 0 42 23c0 5-4 8-9 8s-6-2-4-4c3-5-2-11-9-11-6 0-12 2-14 6z" fill="url(#edgeTop)" />
          <path d="M20 21c-6 5-5 17 7 21 7-1 12-5 13.500-9-7 4-22 2-20.500-12z" fill="#134a9c" />
          <path d="M27 20c4 2 4 5 2 8 1 3 6 4 11 2l1.500-2 1.500 6-3 0c-8 3-16-2-16-8 0-3 1-5 3-6z" fill="#263a3a" />
        </svg>
      </TaskButton>
      <TaskButton>
        <svg viewBox="0 0 48 48" className="size-12">
          <path d="M15 13V8.500q0-1.500 1.500-1.500h14q1.500 0 1.500 1.500V13" fill="none" stroke="#1f9fe8" strokeWidth="2.200" />
          <path d="M6.500 11h35v27q0 4-4 4h-27q-4 0-4-4z" fill="#f1f1f1" />
          <path d="M16 19h7.200v7H16z" fill="#f35325" /><path d="M24.500 19h7.200v7h-7.200z" fill="#81bc06" />
          <path d="M16 27.500h7.200v7H16z" fill="#05a6f0" /><path d="M24.500 27.500h7.200v7h-7.200z" fill="#ffba08" />
        </svg>
      </TaskButton>
      <TaskButton>
        <svg viewBox="0 0 48 48" className="size-12">
          <path d="M12 18L27 9l15 9v9H12z" fill="#28a8ea" />
          <path d="M20 13l7-4 15 9-13 9-8-4z" fill="#1a80d8" />
          <path d="M42 18v4L28 30l-8-4 16-11z" fill="#0b4d9c" />
          <path d="M12 25l16 7 14-10v13q0 4-4 4H16q-4 0-4-4z" fill="#2fb4f5" />
          <path d="M42 22v13q0 4-4 4H18z" fill="#50d9ff" />
          <rect x="6" y="15" width="18" height="18" rx="2" fill="#0f6cbd" />
          <circle cx="15" cy="24" r="4.200" fill="none" stroke="#fff" strokeWidth="2.400" />
        </svg>
      </TaskButton>
      <TaskButton>
        <svg viewBox="0 0 48 48" className="size-12">
          <path d="M8 13q0-2 2-2h10q2 0 3 2l1 2H8z" fill="#dd9b0c" />
          <path d="M8 15h30q2 0 2 2v19H8z" fill="#fcd25c" />
          <path d="M8 15h15l2-2h13q2 0 2 2v2H8z" fill="#ffd769" />
          <path d="M13 38V28q0-3 3-3h16q3 0 3 3v10h-5v-7H18v7z" fill="#3e95dc" />
        </svg>
      </TaskButton>
      <TaskButton><Chrome /></TaskButton>
      <TaskButton open>
        <Chrome>
          <circle cx="33" cy="33.500" r="11.500" fill="#5b4038" />
          <text x="33" y="38.500" textAnchor="middle" fontFamily="Open Sans, sans-serif" fontSize="13.500" fill="#e4dedb">K</text>
        </Chrome>
      </TaskButton>
      <TaskButton open>
        <svg viewBox="1.500 0 48 48" className="size-12">
          <path d="M17 33l2 7q5 4 10 0l2-7z" fill="#b9c2dc" stroke="#556" strokeWidth=".8" />
          <path d="M24 5.500l15 7-2 18-13 9-13-9-2-18z" fill="#dfe6f5" stroke="#8a96b8" strokeWidth=".8" />
          <path d="M24 8.500l10.500 4.500L24 18l-10.500-5z" fill="#14304f" />
          <path d="M12 15.500L22.500 20.500v15.500L14 29.500zM36 15.500L25.500 20.500v15.500L34 29.500z" fill="#1c3c62" />
        </svg>
      </TaskButton>
      <TaskButton open>
        <div className="flex size-12 items-center justify-center"><VmLogo className="size-9" /></div>
      </TaskButton>

      <div className="ml-auto flex items-center">
        <svg viewBox="0 0 42 40" className="mb-0.5 h-10 w-[42px]">
          <circle cx="14" cy="11" r="9" fill="#f5a11c" />
          <path d="M10 22q-7 0-8-6 0-6 7-6 4-6 10-3 5 3 5 6 6 1 6 5t-5 4z" fill="#8db9f2" />
          <path d="M13 34q-6 0-6-5t6-6q3-6 9-5 5 1 6 6 6 1 6 5t-5 5z" fill="#dbe7fb" />
          <circle cx="28" cy="12" r="9.500" fill="#d1382d" />
          <text x="28" y="17" textAnchor="middle" fontFamily="Open Sans, sans-serif" fontSize="14" fill="#fff">1</text>
        </svg>
        <span className="mt-0.5 ml-[8px] w-[56px] text-[20px] tracking-[-0.2px]">30°C</span>
        <span className="mt-0.5 w-[157px] text-[20px] tracking-[-0.15px] whitespace-nowrap">Partly cloudy</span>
        <svg viewBox="0 0 18 10" className="h-2.5 w-[18px]"><path d="M.700 9L9 1l8.300 8" fill="none" stroke="#fff" strokeWidth="1.500" /></svg>
        <svg viewBox="0 0 24 14" className="ml-[15px] h-3.5 w-6">
          <path d="M.700.700h20.600v12.600H.700zM21.500 4.500h1.500v5h-1.500" fill="none" stroke="#fff" strokeWidth="1.300" />
          <path d="M2.500 2.500h17v9h-17z" fill="#fff" />
        </svg>
        <svg viewBox="0 0 20 20" className="mt-0.5 ml-[15px] size-5">
          <path d="M1 19A17 17 0 0 1 18 1.500M5 19A13 13 0 0 1 18 6" fill="none" stroke="#7d898b" strokeWidth="1.300" />
          <path d="M9 19a9 9 0 0 1 9-8.500M13 19a5.500 5.500 0 0 1 5-5" fill="none" stroke="#c8d0d0" strokeWidth="1.300" />
          <circle cx="17" cy="18" r="1.600" fill="#fff" />
        </svg>
        <svg viewBox="0 0 24 20" className="ml-[13px] h-5 w-6">
          <path d="M.700 6.500h3.500L10 1.200v17.600l-5.800-5.300H.700z" fill="none" stroke="#fff" strokeWidth="1.300" />
          <path d="M13 7.500q1.800 2.500 0 5M16 5q4 5 0 10M19.500 2.500q5.500 7.500 0 15" fill="none" stroke="#fff" strokeWidth="1.300" />
        </svg>
        <div className="ml-[15.500px] flex w-[82px] flex-col items-center text-[18px] leading-7">
          <span className="tracking-[-0.35px]">8:19 PM</span>
          <span>26-Jun-25</span>
        </div>
        <svg viewBox="0 0 38 38" className="mt-2.5 ml-[29px] h-[38px] w-[38px]">
          <path d="M0 1h24v19H14l-3 5-5-5H0z" fill="#fff" />
          <path d="M4.500 6.500h15M4.500 10.500h15M4.500 14.500h9" stroke="#24383a" strokeWidth="1.300" />
          <circle cx="24" cy="25" r="11.800" fill="#2b3234" stroke="#8b9496" strokeWidth="1.300" />
          <text x="24" y="31" textAnchor="middle" fontFamily="Open Sans, sans-serif" fontWeight="600" fontSize="16.500" fill="#fff">1</text>
        </svg>
        <div className="ml-[16px] h-[60px] w-0.5 bg-[#7c888b]" />
        <div className="w-1.5" />
      </div>
    </footer>
  );
}

export default function App() {
  return (
    <div className="flex h-[1080px] w-[1920px] flex-col overflow-hidden bg-[#efefef] font-['Open_Sans','Noto_Sans',sans-serif]">
      <TitleBar />
      <MenuBar />
      <main className="flex flex-1 flex-col">
        <div className="mx-auto mt-[53px] flex h-[800px] w-[1280px] shrink-0 flex-col bg-black">
          <TopBar />
          <div className="flex flex-1">
            <Dock />
            <FilesWindow />
          </div>
        </div>
        <div className="mt-auto flex h-9 items-start justify-end pr-[5px]">
          <StatusIcons />
          <span className="ml-1.5 w-[89px] text-[22px] leading-[33px] tracking-[-0.55px] whitespace-nowrap text-black">Right Ctrl</span>
        </div>
      </main>
      <Taskbar />
    </div>
  );
}
